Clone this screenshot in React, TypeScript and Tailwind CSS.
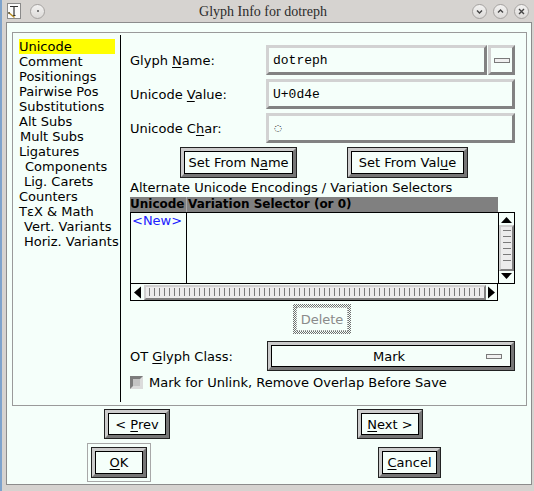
import React from "react";

const BG = "bg-[#f5fffa]";

function U({ children }: { children: React.ReactNode }) {
  return <span className="underline decoration-1 underline-offset-[2px]">{children}</span>;
}

function Btn({ className, children }: { className: string; children: React.ReactNode }) {
  return (
    <div className={className}>
      <div className="h-full w-full border border-[#222]">
        <div className="h-full w-full border-[3px] border-t-[#cccccc] border-l-[#cccccc] border-b-[#767676] border-r-[#767676]">
          <div className="h-full w-full border border-black bg-[#f5fffa] flex items-center justify-center">
            {children}
          </div>
        </div>
      </div>
    </div>
  );
}

function Field({ className, children }: { className: string; children?: React.ReactNode }) {
  return (
    <div
      className={`${className} border-[3px] border-t-[#d2d2d2] border-l-[#d2d2d2] border-b-[#828282] border-r-[#828282] bg-[#f5fffa] flex items-center pl-[4px] font-['Liberation_Mono',monospace] text-[13px]`}
    >
      {children}
    </div>
  );
}

function Circle({ children }: { children?: React.ReactNode }) {
  return (
    <div className="w-[15px] h-[15px] rounded-full border border-[#a5a2a0] bg-[linear-gradient(#f3f2f1,#dcdad8)] flex items-center justify-center">
      {children}
    </div>
  );
}

const items: { t: string; pl: string; sel?: boolean }[] = [
  { t: "Unicode", pl: "pl-0", sel: true },
  { t: "Comment", pl: "pl-0" },
  { t: "Positionings", pl: "pl-0" },
  { t: "Pairwise Pos", pl: "pl-0" },
  { t: "Substitutions", pl: "pl-0" },
  { t: "Alt Subs", pl: "pl-0" },
  { t: "Mult Subs", pl: "pl-[1px]" },
  { t: "Ligatures", pl: "pl-0" },
  { t: "Components", pl: "pl-[6px]" },
  { t: "Lig. Carets", pl: "pl-[5px]" },
  { t: "Counters", pl: "pl-0" },
  { t: "T\u03b5X & Math", pl: "pl-0" },
  { t: "Vert. Variants", pl: "pl-[5px]" },
  { t: "Horiz. Variants", pl: "pl-[5px]" },
];

export default function App() {
  return (
    <div className="w-[534px] h-[491px] bg-[#d6d3d0] flex flex-col overflow-hidden font-['DejaVu_Sans',sans-serif] text-[13px] text-black leading-[15px]">
      {/* Title bar */}
      <div className="h-[22px] grid grid-cols-[1fr_auto_1fr] items-center shrink-0">
        <div className="flex items-center">
          <div className="w-[2px] h-[22px] bg-[#7ea3cc]" />
          <svg className="ml-[5px]" width="14" height="16" viewBox="0 0 14 16">
            <rect x="0.5" y="0.5" width="13" height="15" fill="#fbfbfb" stroke="#8a8a8a" />
            <path d="M3 3.5h8M7 3.5v9M5.5 12.5h3" stroke="#333" strokeWidth="1.2" fill="none" />
            <path d="M1.5 9.5l6 5" stroke="#b8902a" strokeWidth="1.6" />
            <path d="M1.5 9.5l1 0.8" stroke="#333" strokeWidth="1.6" />
          </svg>
          <div className="ml-[9px]">
            <Circle>
              <div className="w-[2px] h-[2px] rounded-full bg-[#555]" />
            </Circle>
          </div>
        </div>
        <div className="font-['Liberation_Serif',serif] text-[14px] text-[#2b2b2b] pr-[8px]">Glyph Info for dotreph</div>
        <div className="flex items-center justify-end gap-[6px] pr-[5px]">
          <Circle>
            <svg width="9" height="9" viewBox="0 0 9 9">
              <path d="M2 3.5l2.5 2.5 2.5-2.5" stroke="#444" strokeWidth="1.4" fill="none" />
            </svg>
          </Circle>
          <Circle>
            <svg width="9" height="9" viewBox="0 0 9 9">
              <path d="M2 5.5l2.5-2.5 2.5 2.5" stroke="#444" strokeWidth="1.4" fill="none" />
            </svg>
          </Circle>
          <Circle>
            <svg width="9" height="9" viewBox="0 0 9 9">
              <path d="M2 2l5 5M7 2l-5 5" stroke="#444" strokeWidth="1.4" fill="none" />
            </svg>
          </Circle>
        </div>
      </div>

      <div className="flex">
        <div className="w-[2px] h-[469px] bg-[#7ea3cc]" />
        {/* Window body */}
        <div className={`ml-[4px] w-[526px] h-[463px] border border-[#8c8c8c] ${BG} flex flex-col`}>
          {/* Inner box */}
          <div className="ml-[5px] mt-[9px] w-[515px] h-[374px] border border-[#9a9a9a] flex">
            {/* List */}
            <div className="w-[108px] mt-[2px] mb-[3px] border-r border-black pl-[6px] pt-[4px] flex flex-col">
              {items.map((it) => (
                <div
                  key={it.t}
                  className={`h-[15px] w-[96px] whitespace-nowrap ${it.pl} ${it.sel ? "bg-[#ffff00]" : ""}`}
                >
                  {it.t}
                </div>
              ))}
            </div>

            {/* Right content */}
            <div className="pl-[9px] pt-[12px] flex flex-col">
              <div className="flex items-center h-[30px]">
                <div className="w-[136px]">
                  Glyph <U>N</U>ame:
                </div>
                <Field className="w-[221px] h-[30px]">dotreph</Field>
                <div className="ml-[1px] w-[27px] h-[30px] border-[3px] border-t-[#d2d2d2] border-l-[#d2d2d2] border-b-[#828282] border-r-[#828282] flex items-center justify-center">
                  <div className="w-[16px] h-[5px] border border-[#7a7a7a] bg-[#f0f0f0]" />
                </div>
              </div>
              <div className="flex items-center h-[30px] mt-[4px]">
                <div className="w-[136px]">
                  Unicode <U>V</U>alue:
                </div>
                <Field className="w-[249px] h-[30px]">U+0d4e</Field>
              </div>
              <div className="flex items-center h-[30px] mt-[4px]">
                <div className="w-[136px]">
                  Unicode C<U>h</U>ar:
                </div>
                <Field className="w-[249px] h-[30px]">
                  <span className="font-['DejaVu_Sans',sans-serif] text-[9px] ml-[1px]">{"\u25cc"}</span>
                </Field>
              </div>
              <div className="flex mt-[4px] pl-[50px] gap-[50px]">
                <Btn className="w-[117px] h-[31px]">
                  <span>
                    Set From N<U>a</U>me
                  </span>
                </Btn>
                <Btn className="w-[121px] h-[31px]">
                  <span>
                    Set From Val<U>u</U>e
                  </span>
                </Btn>
              </div>
              <div className="mt-[2px] h-[15px]">Alternate Unicode Encodings / Variation Selectors</div>

              {/* Table */}
              <div className="mt-[2px] flex flex-col w-[385px]">
                <div className="w-[368px] h-[15px] bg-[#808080] flex font-bold text-[12px] leading-[15px]">
                  <div className="w-[57px] border-r border-[#a8a8a8] whitespace-nowrap overflow-hidden">Unicode</div>
                  <div className="pl-[1px]">Variation Selector (or 0)</div>
                </div>
                <div className="flex">
                  <div className="w-[368px] h-[72px] border border-black border-r-0 flex">
                    <div className="w-[56px] border-r border-black pl-[1px] text-[#2020ff]">&lt;New&gt;</div>
                    <div className="flex-1" />
                  </div>
                  <div className="w-[17px] h-[72px] border border-black flex flex-col items-center">
                    <svg width="15" height="11" viewBox="0 0 15 11" className="mt-[1px]">
                      <path d="M2 9h11L7.5 3z" fill="#000" />
                    </svg>
                    <div className="w-[15px] h-[46px] border-2 border-t-[#d0d0d0] border-l-[#d0d0d0] border-b-[#808080] border-r-[#808080] bg-[#ececec] flex flex-col items-center pt-[3px] gap-[5px]">
                      {[0, 1, 2, 3, 4, 5].map((i) => (
                        <div key={i} className="w-[8px] h-[1px] bg-[#7a7a7a]" />
                      ))}
                    </div>
                    <svg width="15" height="11" viewBox="0 0 15 11">
                      <path d="M2 2h11L7.5 8z" fill="#000" />
                    </svg>
                  </div>
                </div>
                <div className="w-[368px] h-[17px] border border-black border-t-0 flex items-center">
                  <svg width="11" height="15" viewBox="0 0 11 15" className="ml-[1px]">
                    <path d="M9 1.5v12L2 7.5z" fill="#000" />
                  </svg>
                  <div className="ml-[1px] w-[343px] h-[15px] border-2 border-t-[#d0d0d0] border-l-[#d0d0d0] border-b-[#808080] border-r-[#808080] bg-[#ececec] flex items-center pl-[3px] gap-[4px] overflow-hidden">
                    {Array.from({ length: 68 }).map((_, i) => (
                      <div key={i} className="w-[1px] h-[8px] bg-[#7a7a7a] shrink-0" />
                    ))}
                  </div>
                  <svg width="11" height="15" viewBox="0 0 11 15">
                    <path d="M2 1.5v12L9 7.5z" fill="#000" />
                  </svg>
                </div>
              </div>

              {/* Delete */}
              <div className="mt-[3px] flex pl-[163px]">
                <div className="w-[58px] h-[30px] p-[3px] bg-[repeating-conic-gradient(#6e6e6e_0_25%,#f5fffa_0_50%)] bg-[length:2px_2px]">
                  <div className="h-full w-full bg-[#f5fffa] border border-dotted border-[#9a9a9a] flex items-center justify-center text-[#8a8a8a]">
                    Delete
                  </div>
                </div>
              </div>

              <div className="flex items-center h-[30px] mt-[7px]">
                <div className="w-[137px]">
                  OT <U>G</U>lyph Class:
                </div>
                <Btn className="w-[248px] h-[30px]">
                  <div className="relative w-full flex justify-center">
                    <span className="pr-[4px]">Mark</span>
                    <div className="absolute right-[8px] top-[5px] w-[16px] h-[5px] border border-[#7a7a7a] bg-[#f0f0f0]" />
                  </div>
                </Btn>
              </div>

              <div className="flex items-center h-[13px] mt-[5px]">
                <div className="w-[13px] h-[13px] border-[3px] border-t-[#7c7c7c] border-l-[#7c7c7c] border-b-[#dcdcdc] border-r-[#dcdcdc] bg-[#c4c4c4]" />
                <div className="ml-[6px]">Mark for Unlink, Remove Overlap Before Save</div>
              </div>
            </div>
          </div>

          {/* Prev / Next */}
          <div className="flex mt-[3px]">
            <Btn className="ml-[97px] w-[66px] h-[30px]">
              <span>
                &lt; <U>P</U>rev
              </span>
            </Btn>
            <Btn className="ml-[187px] w-[66px] h-[30px]">
              <span>
                <U>N</U>ext &gt;
              </span>
            </Btn>
          </div>

          {/* OK / Cancel */}
          <div className="flex mt-[4px]">
            <div className="ml-[80px] w-[64px] h-[39px] border border-[#a8a8a8] p-[3px]">
              <Btn className="w-[56px] h-[31px]">
                <span>
                  <U>O</U>K
                </span>
              </Btn>
            </div>
            <Btn className="ml-[227px] mt-[4px] w-[63px] h-[31px]">
              <span>
                <U>C</U>ancel
              </span>
            </Btn>
          </div>
        </div>
      </div>
    </div>
  );
}
